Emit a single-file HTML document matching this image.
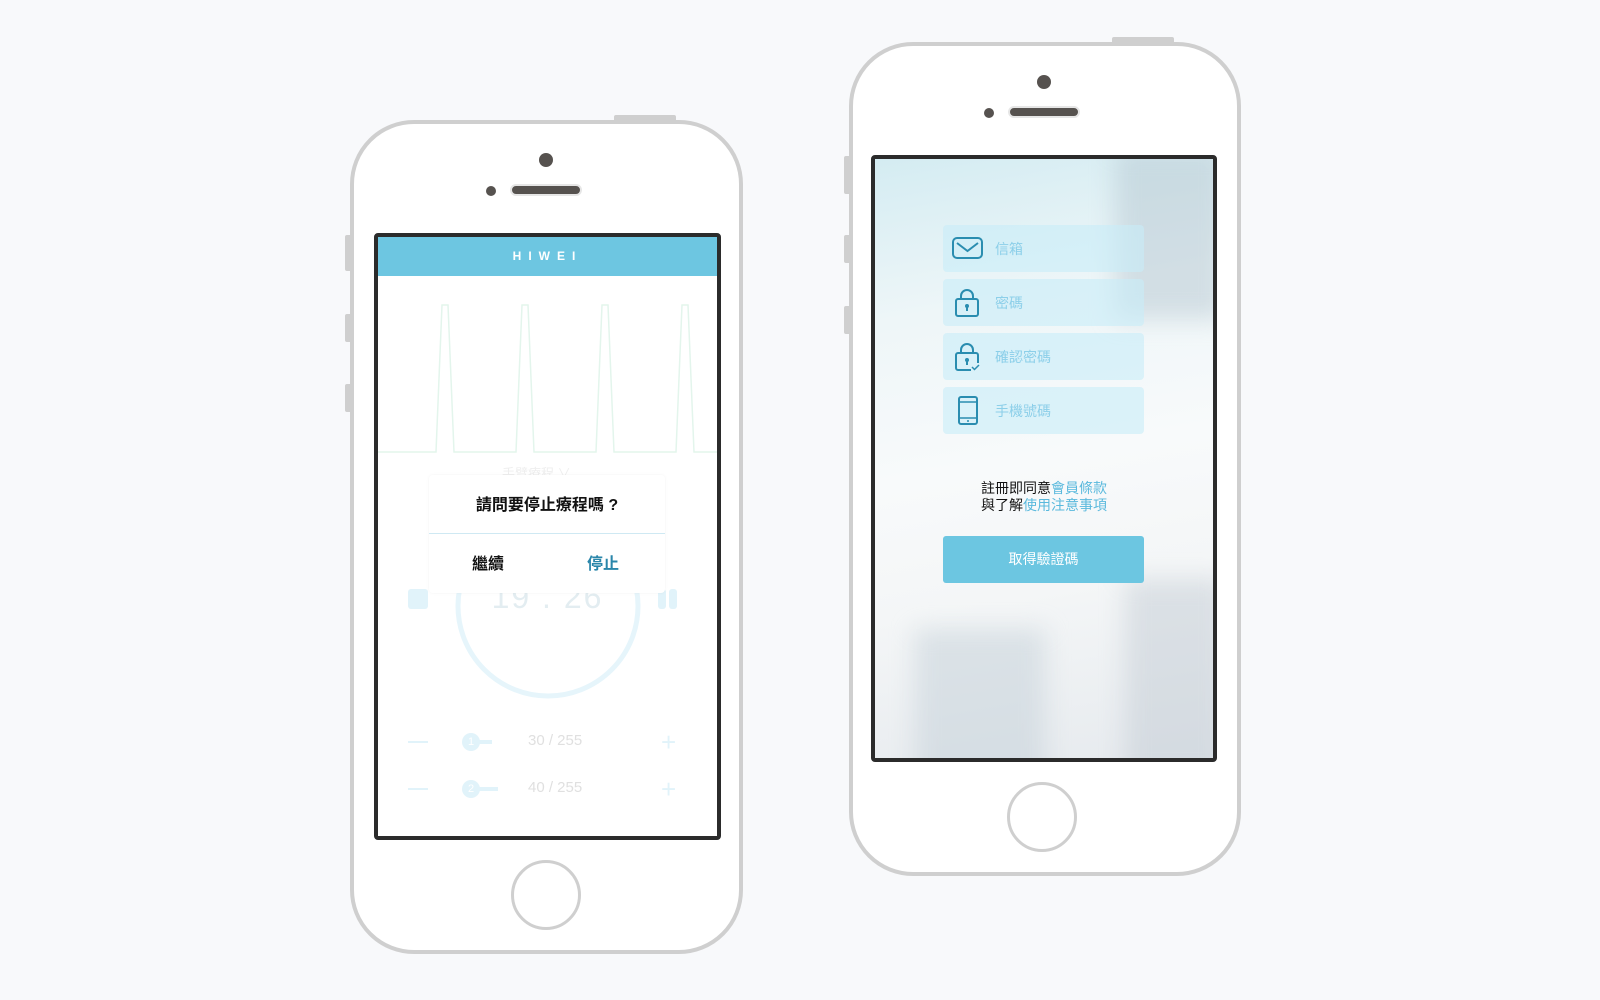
<!DOCTYPE html>
<html><head><meta charset="utf-8"><style>
*{margin:0;padding:0;box-sizing:border-box}
body{width:1600px;height:1000px;background:#f8f9fb;position:relative;overflow:hidden;font-family:"Liberation Sans","Noto Sans CJK TC",sans-serif}
.abs{position:absolute}
.body{position:absolute;border:4px solid #cfcfcf;background:#fff;border-radius:64px}
.btn{position:absolute;background:#cfcfcf;border-radius:2px}
.cam{position:absolute;width:14px;height:14px;border-radius:50%;background:#56524f}
.dot{position:absolute;width:10px;height:10px;border-radius:50%;background:#56524f}
.spk{position:absolute;height:12px;border-radius:6px;background:#56524f;border:2px solid #e6e6e6;width:72px}
.home{position:absolute;width:70px;height:70px;border-radius:50%;border:3px solid #cfcfcf;background:#fff}
.screen{position:absolute;border:4px solid #2b2b2b;border-radius:4px;overflow:hidden;background:#fff}
.field{position:absolute;left:68px;width:201px;height:47px;background:rgba(200,236,248,.6);border-radius:4px}
.field span{position:absolute;left:52px;top:14px;font-size:14px;color:#8ccfe9}
.field svg{position:absolute;left:8px;top:8px}
.blur{position:absolute;filter:blur(12px)}
</style></head><body>

<!-- LEFT PHONE -->
<div class="btn" style="left:614px;top:115px;width:62px;height:8px"></div>
<div class="btn" style="left:345px;top:235px;width:7px;height:36px"></div>
<div class="btn" style="left:345px;top:314px;width:7px;height:28px"></div>
<div class="btn" style="left:345px;top:384px;width:7px;height:28px"></div>
<div class="body" style="left:350px;top:120px;width:393px;height:834px"></div>
<div class="cam" style="left:539px;top:153px"></div>
<div class="dot" style="left:486px;top:186px"></div>
<div class="spk" style="left:510px;top:184px"></div>
<div class="home" style="left:511px;top:860px"></div>
<div class="screen" style="left:374px;top:233px;width:347px;height:607px">
  <div class="abs" style="left:0;top:0;width:339px;height:39px;background:#6dc6e1;color:#fff;font-size:12px;letter-spacing:7px;text-align:center;line-height:39px;font-weight:bold">HIWEI</div>
  <svg class="abs" style="left:0;top:39px" width="339" height="180"><polyline fill="none" stroke="#e3f5ec" stroke-width="1.5" points="0,176 58,176 64,29 70,29 76,176 138,176 144,29 150,29 156,176 218,176 224,29 230,29 236,176 298,176 304,29 310,29 316,176 339,176"/></svg>
  <div class="abs" style="left:124px;top:226px;font-size:13px;color:#eee">手臂療程 ∨</div>
  <svg class="abs" style="left:70px;top:275px" width="200" height="200"><circle cx="100" cy="94" r="90" fill="none" stroke="#e6f5fb" stroke-width="5"/></svg>
  <div class="abs" style="left:30px;top:352px;width:20px;height:20px;background:#e1f3fa;border-radius:3px"></div>
  <div class="abs" style="left:280px;top:352px;width:8px;height:20px;background:#e1f3fa;border-radius:3px"></div>
  <div class="abs" style="left:291px;top:352px;width:8px;height:20px;background:#e1f3fa;border-radius:3px"></div>
  <div class="abs" style="left:0;width:339px;top:342px;text-align:center;font-size:32px;color:#e3edf1;letter-spacing:2px">19 . 26</div>
  <div class="abs" style="left:30px;top:504px;width:20px;height:2px;background:#e1f3fa"></div>
  <div class="abs" style="left:30px;top:551px;width:20px;height:2px;background:#e1f3fa"></div>
  <div class="abs" style="left:283px;top:495px;font-size:26px;color:#e1f3fa;line-height:20px">+</div>
  <div class="abs" style="left:283px;top:542px;font-size:26px;color:#e1f3fa;line-height:20px">+</div>
  <div class="abs" style="left:84px;top:496px;width:18px;height:18px;border-radius:50%;background:#e1f3fa;color:#fff;font-size:11px;text-align:center;line-height:18px">1</div>
  <div class="abs" style="left:100px;top:503px;width:14px;height:4px;background:#e1f3fa"></div>
  <div class="abs" style="left:84px;top:543px;width:18px;height:18px;border-radius:50%;background:#e1f3fa;color:#fff;font-size:11px;text-align:center;line-height:18px">2</div>
  <div class="abs" style="left:100px;top:550px;width:20px;height:4px;background:#e1f3fa"></div>
  <div class="abs" style="left:150px;top:495px;font-size:15px;color:#e0e0e0">30 / 255</div>
  <div class="abs" style="left:150px;top:542px;font-size:15px;color:#e0e0e0">40 / 255</div>
  <!-- dialog -->
  <div class="abs" style="left:51px;top:238px;width:236px;height:118px;background:#fff;border-radius:4px;box-shadow:0 0 3px rgba(0,0,0,.05)">
    <div class="abs" style="left:0;width:236px;top:16px;text-align:center;font-size:16px;color:#111;font-weight:bold">請問要停止療程嗎 ?</div>
    <div class="abs" style="left:0;top:58px;width:236px;height:1px;background:#cfe9f3"></div>
    <div class="abs" style="left:43px;top:75px;font-size:16px;color:#111;font-weight:bold">繼續</div>
    <div class="abs" style="left:158px;top:75px;font-size:16px;color:#2a86aa;font-weight:bold">停止</div>
  </div>
</div>

<!-- RIGHT PHONE -->
<div class="btn" style="left:1112px;top:37px;width:62px;height:8px"></div>
<div class="btn" style="left:844px;top:156px;width:7px;height:38px"></div>
<div class="btn" style="left:844px;top:235px;width:7px;height:28px"></div>
<div class="btn" style="left:844px;top:306px;width:7px;height:28px"></div>
<div class="body" style="left:849px;top:42px;width:392px;height:834px"></div>
<div class="cam" style="left:1037px;top:75px"></div>
<div class="dot" style="left:984px;top:108px"></div>
<div class="spk" style="left:1008px;top:106px"></div>
<div class="home" style="left:1007px;top:782px"></div>
<div class="screen" style="left:871px;top:155px;width:346px;height:607px;background:linear-gradient(170deg,#d4ecf2 0%,#eef6f8 25%,#f8fafb 50%,#f4f6f7 70%,#e6eaee 100%)">
  <div class="blur" style="left:240px;top:-10px;width:110px;height:170px;background:rgba(175,192,204,.45)"></div>
  <div class="blur" style="left:40px;top:470px;width:130px;height:160px;background:rgba(190,203,213,.45)"></div>
  <div class="blur" style="left:250px;top:420px;width:100px;height:200px;background:rgba(185,195,205,.4)"></div>
  <div class="field" style="top:66px"><svg width="34" height="30"><rect x="2" y="5" width="29" height="20" rx="4" fill="none" stroke="#2a8db0" stroke-width="2"/><polyline points="6,10 16.5,18 27,10" fill="none" stroke="#2a8db0" stroke-width="2"/></svg><span>信箱</span></div>
  <div class="field" style="top:120px"><svg width="34" height="32"><path d="M10,12 V9 a6,6 0 0 1 12,0 V12" fill="none" stroke="#2a8db0" stroke-width="2"/><rect x="5" y="12" width="22" height="17" rx="2" fill="none" stroke="#2a8db0" stroke-width="2"/><circle cx="16" cy="19" r="2" fill="#2a8db0"/><rect x="15" y="19" width="2" height="5" fill="#2a8db0"/></svg><span>密碼</span></div>
  <div class="field" style="top:174px"><svg width="34" height="32"><path d="M10,12 V9 a6,6 0 0 1 12,0 V12" fill="none" stroke="#2a8db0" stroke-width="2"/><path d="M20,29 H7 a2,2 0 0 1 -2,-2 V14 a2,2 0 0 1 2,-2 H25 a2,2 0 0 1 2,2 V22" fill="none" stroke="#2a8db0" stroke-width="2"/><circle cx="16" cy="19" r="2" fill="#2a8db0"/><rect x="15" y="19" width="2" height="5" fill="#2a8db0"/><polyline points="21,26 23.5,28.5 28,24" fill="none" stroke="#2a8db0" stroke-width="1.5"/></svg><span>確認密碼</span></div>
  <div class="field" style="top:228px"><svg width="34" height="32"><rect x="8" y="2" width="18" height="27" rx="2" fill="none" stroke="#2a8db0" stroke-width="2"/><line x1="8" y1="7" x2="26" y2="7" stroke="#2a8db0" stroke-width="1.5"/><line x1="8" y1="23" x2="26" y2="23" stroke="#2a8db0" stroke-width="1.5"/><circle cx="17" cy="26" r="1" fill="#2a8db0"/></svg><span>手機號碼</span></div>
  <div class="abs" style="left:0;width:338px;top:321px;text-align:center;font-size:14px;line-height:17px;color:#111">註冊即同意<span style="color:#5ab9dd">會員條款</span><br>與了解<span style="color:#5ab9dd">使用注意事項</span></div>
  <div class="abs" style="left:68px;top:377px;width:201px;height:47px;background:#6cc6e1;border-radius:3px;color:#fff;font-size:14px;text-align:center;line-height:47px">取得驗證碼</div>
</div>
</body></html>
